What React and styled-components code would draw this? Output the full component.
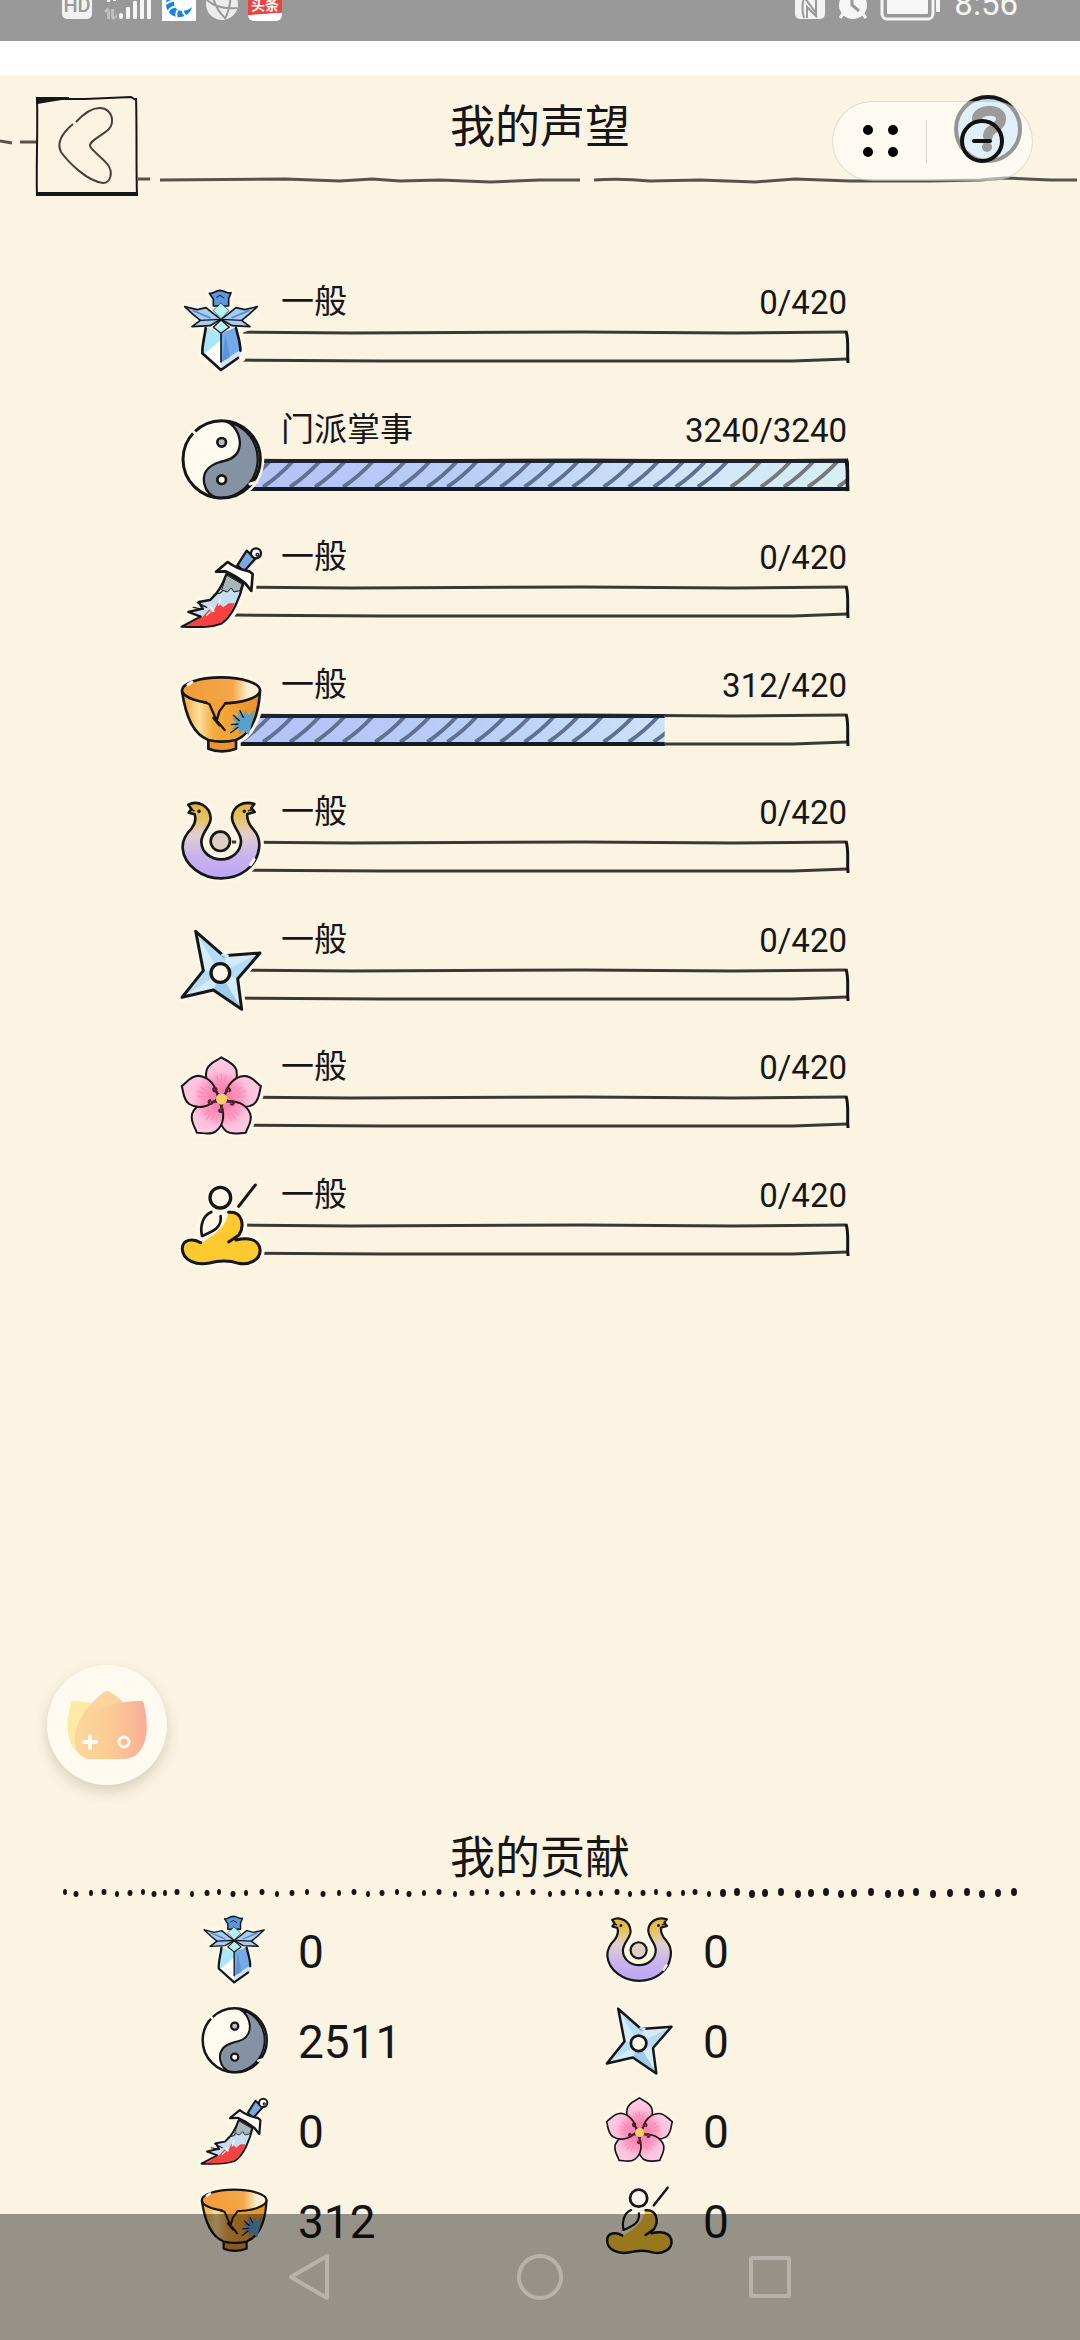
import React from "react";
import styled, { createGlobalStyle } from "styled-components";

const INK = "#161616";
const PAPER = "#fcf4e2";
const HALO = "#fdf7e9";

const GlobalStyle = createGlobalStyle`
  * {
    box-sizing: border-box;
  }
  body {
    margin: 0;
    background: ${PAPER};
    color: ${INK};
    font-family: Roboto, "Noto Sans CJK SC", sans-serif;
  }
  button {
    display: block;
    padding: 0;
    border: 0;
    background: none;
    color: inherit;
    font: inherit;
    cursor: pointer;
  }
  svg {
    display: block;
    overflow: visible;
  }
`;

const Page = styled.div`
  display: flex;
  flex-flow: column nowrap;
  min-height: 100vh;
`;

/* ---------- status bar ---------- */

const StatusBar = styled.div`
  display: flex;
  justify-content: space-between;
  height: 41px;
  padding: 0 62px;
  background: #999;
  overflow: hidden;
`;

const StatusGroup = styled.div`
  display: flex;
  align-items: center;
  gap: ${(props) => props.$gap}px;
  height: 34px;
  margin-top: -13px;
  color: #f6f6f6;
`;

const HdBadge = styled.span`
  width: 30px;
  height: 30px;
  border-radius: 5px;
  background: #f2f2f2;
  color: #999;
  font-size: 20px;
  font-weight: 500;
  line-height: 32px;
  text-align: center;
`;

const NewsBadge = styled.span`
  display: flex;
  align-items: flex-end;
  justify-content: center;
  width: 34px;
  height: 34px;
  border-radius: 6px;
  background: linear-gradient(176deg, #f04142 76%, #fff 78%);
  color: #fff;
  font-size: 14px;
  font-weight: 700;
  line-height: 14px;
  padding-bottom: 9px;
`;

const Clock = styled.time`
  font-size: 33px;
  line-height: 34px;
`;

const TopGap = styled.div`
  height: 34px;
  background: #fff;
`;

/* ---------- header ---------- */

const Header = styled.header`
  position: relative;
  display: grid;
  grid-template-columns: 1fr auto 1fr;
  align-items: start;
  height: 134px;
  padding: 20px 57px 0 35px;
`;

const HeaderLine = styled.svg`
  position: absolute;
  top: 0;
  left: 0;
  width: 100%;
  height: 100%;
  pointer-events: none;
`;

const Title = styled.h1`
  margin: 0;
  padding-left: 22px;
  font-size: 45px;
  font-weight: 400;
  line-height: 66px;
`;

const BackButton = styled.button`
  justify-self: start;
`;

const HelpButton = styled.button`
  justify-self: end;
`;

const Capsule = styled.div`
  position: absolute;
  top: 101px;
  right: 47px;
  display: flex;
  align-items: center;
  width: 201px;
  height: 80px;
  border: 1px solid rgba(0, 0, 0, 0.12);
  border-radius: 40px;
  background: rgba(255, 255, 255, 0.55);
`;

const CapsuleButton = styled.button`
  display: grid;
  place-items: center;
  flex: ${(props) => props.$grow} 1 0;
  height: 100%;
`;

const CapsuleDivider = styled.span`
  width: 1px;
  height: 43px;
  background: rgba(0, 0, 0, 0.15);
`;

/* ---------- reputation ---------- */

const ReputationList = styled.ul`
  display: flex;
  flex-flow: column nowrap;
  justify-content: space-between;
  height: 983px;
  margin: 73px 231px 0 181px;
  padding: 0;
  list-style: none;
`;

const ReputationRow = styled.li`
  display: flex;
  height: 90px;
`;

const IconSlot = styled.div`
  position: relative;
  z-index: 1;
  flex: none;
  align-self: flex-end;
`;

const RowBody = styled.div`
  display: flex;
  flex-flow: column nowrap;
  gap: 8px;
  flex: 1;
  margin-left: -31px;
`;

const Caption = styled.div`
  display: flex;
  justify-content: space-between;
  height: 40px;
  padding-left: 49px;
  padding-right: 2px;
`;

const Rank = styled.span`
  font-size: 33px;
  line-height: 40px;
`;

const Progress = styled.span`
  font-size: 33px;
  line-height: 42px;
`;

const BarSvg = styled.svg`
  width: 100%;
  height: 34px;
`;

/* ---------- contribution ---------- */

const Contribution = styled.section`
  margin-top: auto;
  padding-bottom: 86px;
`;

const SubTitle = styled.h2`
  margin: 0;
  font-size: 45px;
  font-weight: 400;
  line-height: 56px;
  text-align: center;
`;

const DottedLine = styled.svg`
  width: 100%;
  height: 12px;
`;

const ContributionGrid = styled.ul`
  display: grid;
  grid-template-columns: 1fr 1fr;
  grid-template-rows: repeat(4, 68px);
  grid-auto-flow: column;
  row-gap: 22px;
  margin: 17px 0 0;
  padding: 0 69px 0 201px;
  list-style: none;
`;

const ContributionItem = styled.li`
  display: flex;
  align-items: center;
  gap: 29px;
`;

const Points = styled.span`
  padding-top: 4px;
  font-size: 46px;
  line-height: 64px;
`;

/* ---------- overlays ---------- */

const FloatButton = styled.button`
  && {
    position: fixed;
    left: 47px;
    bottom: 555px;
    width: 120px;
    height: 120px;
    border-radius: 50%;
    background: #fefaf0;
    box-shadow: 0 6px 14px rgba(60, 60, 30, 0.2);
  }
`;

const NavBar = styled.nav`
  position: fixed;
  right: 0;
  bottom: 0;
  left: 0;
  z-index: 2;
  display: grid;
  grid-template-columns: repeat(3, 230px);
  justify-content: center;
  height: 126px;
  background: rgba(0, 0, 0, 0.4);
`;

const NavButton = styled.button`
  && {
    display: grid;
    place-items: center;
    color: rgba(255, 255, 255, 0.3);
  }
`;

/* ---------- faction icons ---------- */

const Icon = ({ size, box, label, children }) => (
  <svg
    width={size}
    height={size}
    viewBox={box}
    role="img"
    aria-label={label}
    fill="none"
    stroke={INK}
    strokeWidth="8"
    strokeLinejoin="round"
    strokeLinecap="round"
  >
    {children}
  </svg>
);

const Halo = ({ d }) => <path d={d} fill={HALO} stroke={HALO} strokeWidth="28" />;

const SwordIcon = ({ size }) => (
  <Icon size={size} box="63 60 246 246" label="剑">
    <Halo d="M148 68L213 68L205 108L290 112L262 168L234 178L243 262L183 300L127 250L137 175L98 168L76 112L160 108Z" />
    <g strokeWidth="0">
      <path d="M137 172L183 190V300L127 250Z" fill="#a9e6f8" />
      <path d="M183 210V300L132 252Z" fill="#fff" />
      <path d="M183 190L228 172L243 240L183 278Z" fill="#74a9ea" />
      <path d="M183 278L243 238L240 262L183 300Z" fill="#cfe3fa" />
      <path d="M196 196L210 262L186 275Z" fill="#5b93dc" />
    </g>
    <path d="M137 174C134 200 126 225 127 250L183 300L234 264M228 174C234 200 242 220 241 242" />
    <path d="M183 192V276" strokeWidth="5" />
    <path d="M148 70C160 72 164 62 180 61C196 62 202 72 213 68L206 86V108H160V88Z" fill="#5b97dd" strokeWidth="5" />
    <path d="M170 82L180 76L192 84" strokeWidth="3" />
    <path
      d="M74 110L112 119L138 113L164 134L183 148L150 167L96 170L121 151L100 134Z"
      fill="#a3cdf4"
      strokeWidth="5"
    />
    <path
      d="M292 110L254 119L228 113L202 134L183 148L216 167L270 170L245 151L266 134Z"
      fill="#a3cdf4"
      strokeWidth="5"
    />
    <path d="M100 122L150 143M266 122L216 143" stroke="#5587c9" strokeWidth="5" />
    <path d="M121 151L183 148L245 151" strokeWidth="4" />
    <path d="M183 100L207 122L183 146L160 122Z" fill="#b4f3f8" strokeWidth="2" />
    <path d="M183 150L208 172L183 190L160 172Z" fill="#b4f3f8" strokeWidth="4" />
  </Icon>
);

const TaijiIcon = ({ size }) => (
  <Icon size={size} box="63 442 246 246" label="太极">
    <circle cx="185" cy="566" r="128" fill={HALO} stroke="none" />
    <circle cx="185" cy="566" r="116" fill="#fefaf0" stroke="none" />
    <path
      d="M198 452C232 465 248 510 235 540C224 564 204 568 180 574C146 584 126 606 133 640C138 662 152 676 172 682A116 116 0 0 0 198 452Z"
      fill="#8592a4"
      strokeWidth="7"
    />
    <circle cx="185" cy="566" r="116" strokeWidth="9" />
    <circle cx="185" cy="515" r="13" fill="#b9bdc0" />
    <circle cx="185" cy="627" r="13" fill="#fefaf0" />
    <path d="M96 478L112 496M270 640L290 634" stroke={HALO} strokeWidth="9" />
  </Icon>
);

const BLADE =
  "M200 160L250 190C240 232 218 288 185 310C150 324 108 320 65 320L122 290L85 276L128 266L116 246L150 240C172 222 188 195 200 160Z";

const DaggerIcon = ({ size }) => (
  <Icon size={size} box="63 75 246 246" label="刀">
    <Halo d={BLADE} />
    <Halo d="M168 155L203 126L232 138L284 88L300 100L260 152L278 162L274 213L250 188Z" />
    <path d={BLADE} fill="#c6ddf2" strokeWidth="7" />
    <path d="M201 166L246 192L240 212L222 216L214 204L202 216L186 210Z" fill="#a7b6bb" strokeWidth="3" />
    <path
      d="M128 290L148 268L158 278L174 248L190 262L206 250L224 250C210 284 198 300 182 308C150 320 112 318 76 318Z"
      fill="#f5413f"
      strokeWidth="0"
    />
    <path d="M150 258L162 274M182 236L176 256M140 286L150 276" stroke="#fff" strokeWidth="4" />
    <path d="M112 248L140 262M100 262L130 268M186 214C178 226 168 216 160 226" strokeWidth="4" />
    <path d="M260 92L286 116L252 154L232 136Z" fill="#7aa8e2" strokeWidth="7" />
    <circle cx="288" cy="100" r="15" fill="#fff" strokeWidth="7" />
    <circle cx="292" cy="104" r="4" strokeWidth="4" />
    <path
      d="M168 155L203 126C224 142 244 150 268 154L278 162L274 213L256 190C238 176 220 164 196 154Z"
      fill="#fffdf8"
    />
  </Icon>
);

const BowlIcon = ({ size }) => (
  <Icon size={size} box="63 457 246 246" label="碗">
    <defs>
      <linearGradient id="bowlIn">
        <stop offset="0.1" stopColor="#f29c3a" />
        <stop offset="0.65" stopColor="#f5a84a" />
        <stop offset="0.85" stopColor="#fdf0d2" />
      </linearGradient>
      <linearGradient id="bowlOut">
        <stop offset="0" stopColor="#f3a235" />
        <stop offset="0.22" stopColor="#fbdf9c" />
        <stop offset="0.4" stopColor="#f5ac3d" />
        <stop offset="1" stopColor="#e8922a" />
      </linearGradient>
    </defs>
    <Halo d="M65 510C110 455 260 455 300 510C295 590 270 640 228 658V684Q185 698 145 684V660C100 640 78 590 65 510Z" />
    <path d="M145 652V684Q185 700 228 684V652Z" fill="#e8952f" />
    <path
      d="M66 512C78 590 100 640 145 658Q185 668 228 658C272 640 296 590 300 510Z"
      fill="url(#bowlOut)"
    />
    <ellipse cx="183" cy="509" rx="117" ry="39" fill="url(#bowlIn)" />
    <path d="M138 536L170 600L198 536Z" fill="#f2a03c" strokeWidth="0" />
    <path d="M132 545L148 550L170 600L178 572L196 548M160 592L178 614L174 604L194 628" strokeWidth="7" />
    <path
      d="M284 562L278 598L266 644L250 628L238 642L236 622L216 626L230 608L216 594L236 590L232 570L250 586L256 566L266 586Z"
      fill="#5b9fcb"
      strokeWidth="0"
    />
    <path d="M240 570L250 590M220 584L238 600M214 612L234 610M212 636L234 620" strokeWidth="4" />
    <path d="M84 492L96 484" stroke={HALO} strokeWidth="9" />
  </Icon>
);

const SNAKE =
  "M85 74C112 60 150 76 152 115C152 140 125 155 124 185C125 220 155 238 183 238C215 238 243 215 243 183C242 155 216 140 216 112C218 78 250 62 283 72L274 84L284 96L262 102C260 120 268 135 280 148C295 165 300 185 297 205C290 260 240 295 183 295C125 295 72 255 68 205C66 180 80 160 95 145C106 130 108 115 104 103L86 98L94 87Z";

const SnakeIcon = ({ size }) => (
  <Icon size={size} box="63 60 246 246" label="双蛇">
    <defs>
      <linearGradient id="snake" x1="0" y1="0" x2="0" y2="1">
        <stop offset="0" stopColor="#e0b33a" />
        <stop offset="0.2" stopColor="#e6c35f" />
        <stop offset="0.42" stopColor="#e0cfcf" />
        <stop offset="0.7" stopColor="#c9b3ee" />
        <stop offset="1" stopColor="#bfa5f4" />
      </linearGradient>
    </defs>
    <Halo d={SNAKE} />
    <path d={SNAKE} fill="url(#snake)" />
    <circle cx="181" cy="184" r="29" fill="#dccfc3" />
    <circle cx="117" cy="94" r="3" strokeWidth="5" />
    <circle cx="253" cy="94" r="3" strokeWidth="5" />
    <path d="M92 88L102 92M278 88L266 92" strokeWidth="5" />
    <path d="M272 254L282 238" stroke={HALO} strokeWidth="9" />
  </Icon>
);

const STAR = "M107 452L190 525L300 517L233 594L245 686L160 628L66 650L130 570Z";

const StarIcon = ({ size }) => (
  <Icon size={size} box="63 442 246 246" label="飞镖">
    <Halo d={STAR} />
    <path d={STAR} fill="#b5dcf5" stroke="none" />
    <path
      d="M181 577L112 462L130 570ZM181 577L292 521L200 526ZM181 577L240 680L232 594ZM181 577L74 646L160 626Z"
      fill="#d3ecfa"
      strokeWidth="0"
    />
    <path d="M181 577L240 678L162 628Z" fill="#9ccbee" strokeWidth="0" />
    <path d={STAR} strokeWidth="9" />
    <circle cx="181" cy="577" r="28" fill={HALO} strokeWidth="10" />
    <path d="M188 523L202 525" stroke="#cfe9f9" strokeWidth="9" />
  </Icon>
);

const PETAL =
  "M184 196C150 182 132 150 140 120C147 97 172 92 184 82C197 92 221 97 229 120C236 150 218 182 184 196Z";

const FlowerIcon = ({ size }) => (
  <Icon size={size} box="63 75 246 246" label="桃花">
    <defs>
      <radialGradient id="petal" gradientUnits="userSpaceOnUse" cx="184" cy="207" r="124">
        <stop offset="0.2" stopColor="#ff7fae" />
        <stop offset="0.48" stopColor="#ff9cc4" />
        <stop offset="0.68" stopColor="#ffc0dd" />
        <stop offset="1" stopColor="#ffcde4" />
      </radialGradient>
    </defs>
    {[0, 72, 144, 216, 288].map((deg) => (
      <g key={deg} transform={`rotate(${deg} 184 207)`}>
        <Halo d={PETAL} />
      </g>
    ))}
    {[0, 72, 144, 216, 288].map((deg) => (
      <g key={deg} transform={`rotate(${deg} 184 207)`}>
        <path d={PETAL} fill="url(#petal)" strokeWidth="6" />
        <path d="M176 158L170 138M184 154V132M192 158L198 138" stroke="#ff86b4" strokeWidth="3" />
      </g>
    ))}
    {[36, 108, 180, 252, 324].map((deg) => (
      <path
        key={deg}
        d="M184 186V178a5 5 0 1 1 6 -4"
        transform={`rotate(${deg} 184 207)`}
        stroke="#4a2536"
        strokeWidth="7"
      />
    ))}
    <circle cx="185" cy="207" r="17" fill="#fbcb68" strokeWidth="0" />
  </Icon>
);

const ROBE =
  "M206 545C246 540 262 590 232 624C262 620 296 624 300 656C303 690 262 704 236 698C205 690 175 690 148 697C110 705 68 690 67 655C66 625 100 622 126 637C160 612 196 596 206 545Z";

const MonkIcon = ({ size }) => (
  <Icon size={size} box="63 457 246 246" label="和尚">
    <Halo d={ROBE} />
    <Halo d="M150 545C125 560 120 590 125 618C155 610 190 590 206 545Z" />
    <circle cx="181" cy="501" r="42" fill={HALO} stroke="none" />
    <path d={ROBE} fill="#fcc92f" strokeWidth="0" />
    <path
      d="M206 545C246 540 256 584 236 614L206 634M228 628C262 620 296 624 300 656C303 690 262 704 236 698C205 688 175 690 148 697C110 705 68 690 67 655C66 625 100 622 122 636"
      strokeWidth="9"
    />
    <path d="M154 544C126 556 120 590 126 616C152 604 186 596 182 556" />
    <circle cx="181" cy="501" r="31" fill={HALO} strokeWidth="10" />
    <path d="M236 527L286 463" strokeWidth="9" />
  </Icon>
);

/* ---------- data ---------- */

const factions = [
  { id: "sword", icon: SwordIcon, rank: "一般", value: 0, max: 420, fill: 0, points: 0 },
  { id: "taiji", icon: TaijiIcon, rank: "门派掌事", value: 3240, max: 3240, fill: 616, points: 2511 },
  { id: "dagger", icon: DaggerIcon, rank: "一般", value: 0, max: 420, fill: 0, points: 0 },
  { id: "bowl", icon: BowlIcon, rank: "一般", value: 312, max: 420, fill: 432, points: 312 },
  { id: "snake", icon: SnakeIcon, rank: "一般", value: 0, max: 420, fill: 0, points: 0 },
  { id: "star", icon: StarIcon, rank: "一般", value: 0, max: 420, fill: 0, points: 0 },
  { id: "flower", icon: FlowerIcon, rank: "一般", value: 0, max: 420, fill: 0, points: 0 },
  { id: "monk", icon: MonkIcon, rank: "一般", value: 0, max: 420, fill: 0, points: 0 },
];

const hatches = [
  8, 31, 58, 83, 111, 143, 168, 195, 215, 243, 268, 292, 316, 340, 371, 396,
  421, 443, 465, 498, 528, 551, 575, 605,
];

const dots = [
  65, 76, 91, 104, 117, 130, 143, 154, 165, 177, 192, 207, 219, 233, 246, 262,
  277, 292, 307, 323, 339, 354, 368, 382, 397, 409, 424, 439, 455, 472, 487,
  502, 518, 533, 550, 563, 577, 589, 601, 617, 630, 643, 656, 669, 683, 695,
  709, 723, 737, 752, 765, 781, 798, 811, 826, 841, 854, 871, 888, 901, 916,
  933, 950, 967, 982, 998, 1014,
];

const Bar = ({ id, value, max, fill }) => (
  <BarSvg
    viewBox="0 0 616 34"
    preserveAspectRatio="none"
    role="progressbar"
    aria-valuenow={value}
    aria-valuemax={max}
  >
    <defs>
      <linearGradient id={`fill-${id}`} gradientUnits="userSpaceOnUse" x1="0" y1="0" x2="616" y2="0">
        <stop offset="0.1" stopColor="#b4c4f6" />
        <stop offset="0.4" stopColor="#b9cff7" />
        <stop offset="0.75" stopColor="#cfe6f8" />
        <stop offset="1" stopColor="#d8eff3" />
      </linearGradient>
      <clipPath id={`clip-${id}`}>
        <rect x="0" y="0" width={fill} height="34" />
      </clipPath>
    </defs>
    <g fill="none" stroke="#3a3a35">
      <path d="M0 2L120 3L350 2L500 3L613 2" strokeWidth="3" />
      <path d="M0 30L150 31L380 31L560 31L614 29" strokeWidth="3" />
      <path d="M613 1C616 10 614 20 615 33" stroke={INK} strokeWidth="3" />
    </g>
    {fill > 0 && (
      <g clipPath={`url(#clip-${id})`} fill="none">
        <path d="M0 2H612L614 31H0Z" fill={`url(#fill-${id})`} />
        {hatches.map((x) => (
          <path
            key={x}
            d={`M${x} 29Q${x + 16} 18 ${x + 29} 4`}
            stroke={x > 490 ? "#73797c" : "#5f7090"}
            strokeWidth="4"
          />
        ))}
        <path d="M0 3H613" stroke="#1d2430" strokeWidth="4" />
        <path d="M0 31H614" stroke="#151a24" strokeWidth="4" />
        <path d="M613 1C616 10 614 20 615 33" stroke={INK} strokeWidth="4" />
      </g>
    )}
  </BarSvg>
);

const StatusIcons = () => (
  <StatusBar>
    <StatusGroup $gap={10}>
      <HdBadge>HD</HdBadge>
      <svg width="50" height="34" viewBox="0 0 50 34" fill="currentColor">
        <path d="M2 24L6 20L8 24V32H5V26ZM9 22H12V30L15 26V30L11 33L9 31Z" opacity="0.4" />
        <path d="M5 9h3v6h-3zM11 7h3v7h-3z" />
        <rect x="17" y="26" width="4" height="6" rx="2" />
        <rect x="24" y="20" width="4" height="12" rx="1" />
        <rect x="31" y="14" width="4" height="18" rx="1" />
        <rect x="38" y="8" width="4" height="24" rx="1" />
        <rect x="45" y="2" width="4" height="30" rx="1" />
      </svg>
      <svg width="34" height="34" viewBox="0 0 34 34">
        <rect width="34" height="34" fill="#fff" />
        <path
          d="M30 6C20 -2 4 4 4 17C4 26 12 31 19 30C25 29 29 25 30 20C24 26 13 25 12 17C12 10 20 6 30 12Z"
          fill="#1583ea"
        />
        <path
          d="M4 17Q9 13 13 14M6 25Q8 20 13 20M15 30Q13 26 16 23M24 29Q20 26 21 22"
          fill="none"
          stroke="#fff"
          strokeWidth="2"
        />
      </svg>
      <svg width="32" height="32" viewBox="0 0 32 32">
        <circle cx="16" cy="16" r="16" fill="#ececec" />
        <path
          d="M1 12Q12 22 31 20M6 4Q8 20 20 31M24 3Q26 16 19 31"
          fill="none"
          stroke="#999"
          strokeWidth="2"
        />
      </svg>
      <NewsBadge>头条</NewsBadge>
    </StatusGroup>
    <StatusGroup $gap={13}>
      <svg width="30" height="30" viewBox="0 0 30 30">
        <rect width="30" height="30" rx="5" fill="#f2f2f2" />
        <path d="M9 29Q6 20 9 8L21 24V4M12 29V18L22 28" fill="none" stroke="#999" strokeWidth="2" />
      </svg>
      <svg width="30" height="30" viewBox="0 0 30 30">
        <circle cx="15" cy="16" r="14" fill="#f6f6f6" />
        <path d="M5 25L2 29M25 25L28 29" stroke="#f6f6f6" strokeWidth="3" />
        <path d="M14 6V16L21 22" fill="none" stroke="#999" strokeWidth="3" />
      </svg>
      <svg width="60" height="32" viewBox="0 0 60 32">
        <rect x="1" y="1" width="51" height="30" rx="5" fill="none" stroke="#f6f6f6" strokeWidth="3" />
        <rect x="6" y="5" width="41" height="21" rx="1" fill="#f6f6f6" />
        <rect x="55" y="8" width="4" height="16" rx="1" fill="#f6f6f6" />
      </svg>
      <Clock>8:56</Clock>
    </StatusGroup>
  </StatusBar>
);

const App = () => {
  return (
    <>
      <GlobalStyle />
      <Page>
        <StatusIcons />
        <TopGap />
        <Header>
          <HeaderLine
            viewBox="0 0 1080 134"
            preserveAspectRatio="none"
            fill="none"
            stroke="#55534c"
            strokeWidth="3"
          >
            <path d="M0 66L12 68M20 67H36" />
            <path d="M138 104H150M160 105L285 104L340 106L372 104L400 106L440 105L490 107L540 105H580" />
            <path d="M594 105Q620 103 650 106L700 105L755 107L795 104L850 106H930L980 105L1005 103L1050 105H1077" />
          </HeaderLine>
          <BackButton aria-label="返回">
            <svg width="104" height="104" viewBox="0 0 104 104" fill="none" stroke={INK} strokeWidth="2">
              <path d="M2 2C3 40 1 70 2 101M101 3C102 30 101 70 102 101" />
              <path d="M2 4L50 4L96 2L101 5" />
              <path d="M2 3H34L20 5L2 8Z" fill={INK} />
              <path d="M2 99H103" strokeWidth="4" />
              <path
                d="M41 27C52 15 62 11 70 14C78 18 79 28 74 34C68 40 54 46 55 51C56 55 68 63 73 70C78 77 76 88 68 88C52 86 34 68 26 57C20 45 32 34 38 29"
                stroke="#44423d"
              />
            </svg>
          </BackButton>
          <Title>我的声望</Title>
          <HelpButton aria-label="帮助">
            <svg width="70" height="70" viewBox="0 0 70 70" fill="none">
              <circle cx="35" cy="34" r="32" fill="#bcdcf0" stroke={INK} strokeWidth="4" />
              <path
                d="M24 24C24 14 48 12 48 24C48 33 35 33 35 41"
                stroke="#222"
                strokeWidth="10"
                strokeLinecap="round"
              />
              <circle cx="34" cy="52" r="5" fill="#222" />
            </svg>
          </HelpButton>
        </Header>

        <ReputationList>
          {factions.map(({ id, icon: FactionIcon, rank, value, max, fill }) => (
            <ReputationRow key={id}>
              <IconSlot>
                <FactionIcon size={82} />
              </IconSlot>
              <RowBody>
                <Caption>
                  <Rank>{rank}</Rank>
                  <Progress>
                    {value}/{max}
                  </Progress>
                </Caption>
                <Bar id={id} value={value} max={max} fill={fill} />
              </RowBody>
            </ReputationRow>
          ))}
        </ReputationList>

        <Contribution>
          <SubTitle>我的贡献</SubTitle>
          <DottedLine viewBox="0 0 1080 12" preserveAspectRatio="none" fill={INK}>
            {dots.map((x, i) => (
              <ellipse
                key={x}
                cx={x}
                cy={6 + ((i * 5) % 3) - 1}
                rx={x > 720 ? 3 : 2 + (i % 2) / 2}
                ry={x > 720 ? 4 : 3}
              />
            ))}
          </DottedLine>
          <ContributionGrid>
            {factions.map(({ id, icon: FactionIcon, points }) => (
              <ContributionItem key={id}>
                <FactionIcon size={68} />
                <Points>{points}</Points>
              </ContributionItem>
            ))}
          </ContributionGrid>
        </Contribution>
      </Page>

      <Capsule>
        <CapsuleButton $grow={93} aria-label="更多">
          <svg width="36" height="34" viewBox="0 0 36 34">
            <circle cx="6" cy="6" r="5" />
            <circle cx="31" cy="6" r="5" />
            <circle cx="6" cy="28" r="5" />
            <circle cx="31" cy="28" r="5" />
          </svg>
        </CapsuleButton>
        <CapsuleDivider />
        <CapsuleButton $grow={105} aria-label="关闭">
          <svg width="46" height="46" viewBox="0 0 46 46" fill="none" stroke="#111" strokeWidth="4">
            <circle cx="25" cy="23" r="20" />
            <path d="M17 23H33" strokeLinecap="round" />
          </svg>
        </CapsuleButton>
      </Capsule>

      <FloatButton aria-label="游戏中心">
        <svg width="120" height="120" viewBox="0 0 120 120">
          <defs>
            <linearGradient id="lotus">
              <stop offset="0" stopColor="#fbd79a" />
              <stop offset="0.5" stopColor="#fccb95" />
              <stop offset="1" stopColor="#f9ad98" />
            </linearGradient>
          </defs>
          <path d="M25 36Q45 36 60 44L50 94H42C20 88 16 62 25 36Z" fill="#fdeaa4" />
          <path d="M60 26C68 27 96 52 92 74L40 94C20 78 28 50 56 28Q58 26 60 26Z" fill="#f9d49c" />
          <path
            d="M94 36Q97 36 97 40C104 68 98 94 76 94H44C32 94 26 82 28 70C32 48 62 36 94 36Z"
            fill="url(#lotus)"
          />
          <path d="M43 71V83M37 77H49" stroke="#fffaf0" strokeWidth="4" strokeLinecap="round" />
          <circle cx="77" cy="77" r="5" fill="none" stroke="#fffaf0" strokeWidth="3" />
        </svg>
      </FloatButton>

      <NavBar>
        <NavButton aria-label="返回上一页">
          <svg width="46" height="50" viewBox="0 0 46 50" fill="none" stroke="currentColor" strokeWidth="4">
            <path d="M40 4V46L4 25Z" strokeLinejoin="round" />
          </svg>
        </NavButton>
        <NavButton aria-label="主屏幕">
          <svg width="46" height="46" viewBox="0 0 46 46" fill="none" stroke="currentColor" strokeWidth="4">
            <circle cx="23" cy="23" r="21" />
          </svg>
        </NavButton>
        <NavButton aria-label="最近任务">
          <svg width="42" height="42" viewBox="0 0 42 42" fill="none" stroke="currentColor" strokeWidth="4">
            <rect x="2" y="2" width="38" height="38" rx="1" />
          </svg>
        </NavButton>
      </NavBar>
    </>
  );
};

export default App;
